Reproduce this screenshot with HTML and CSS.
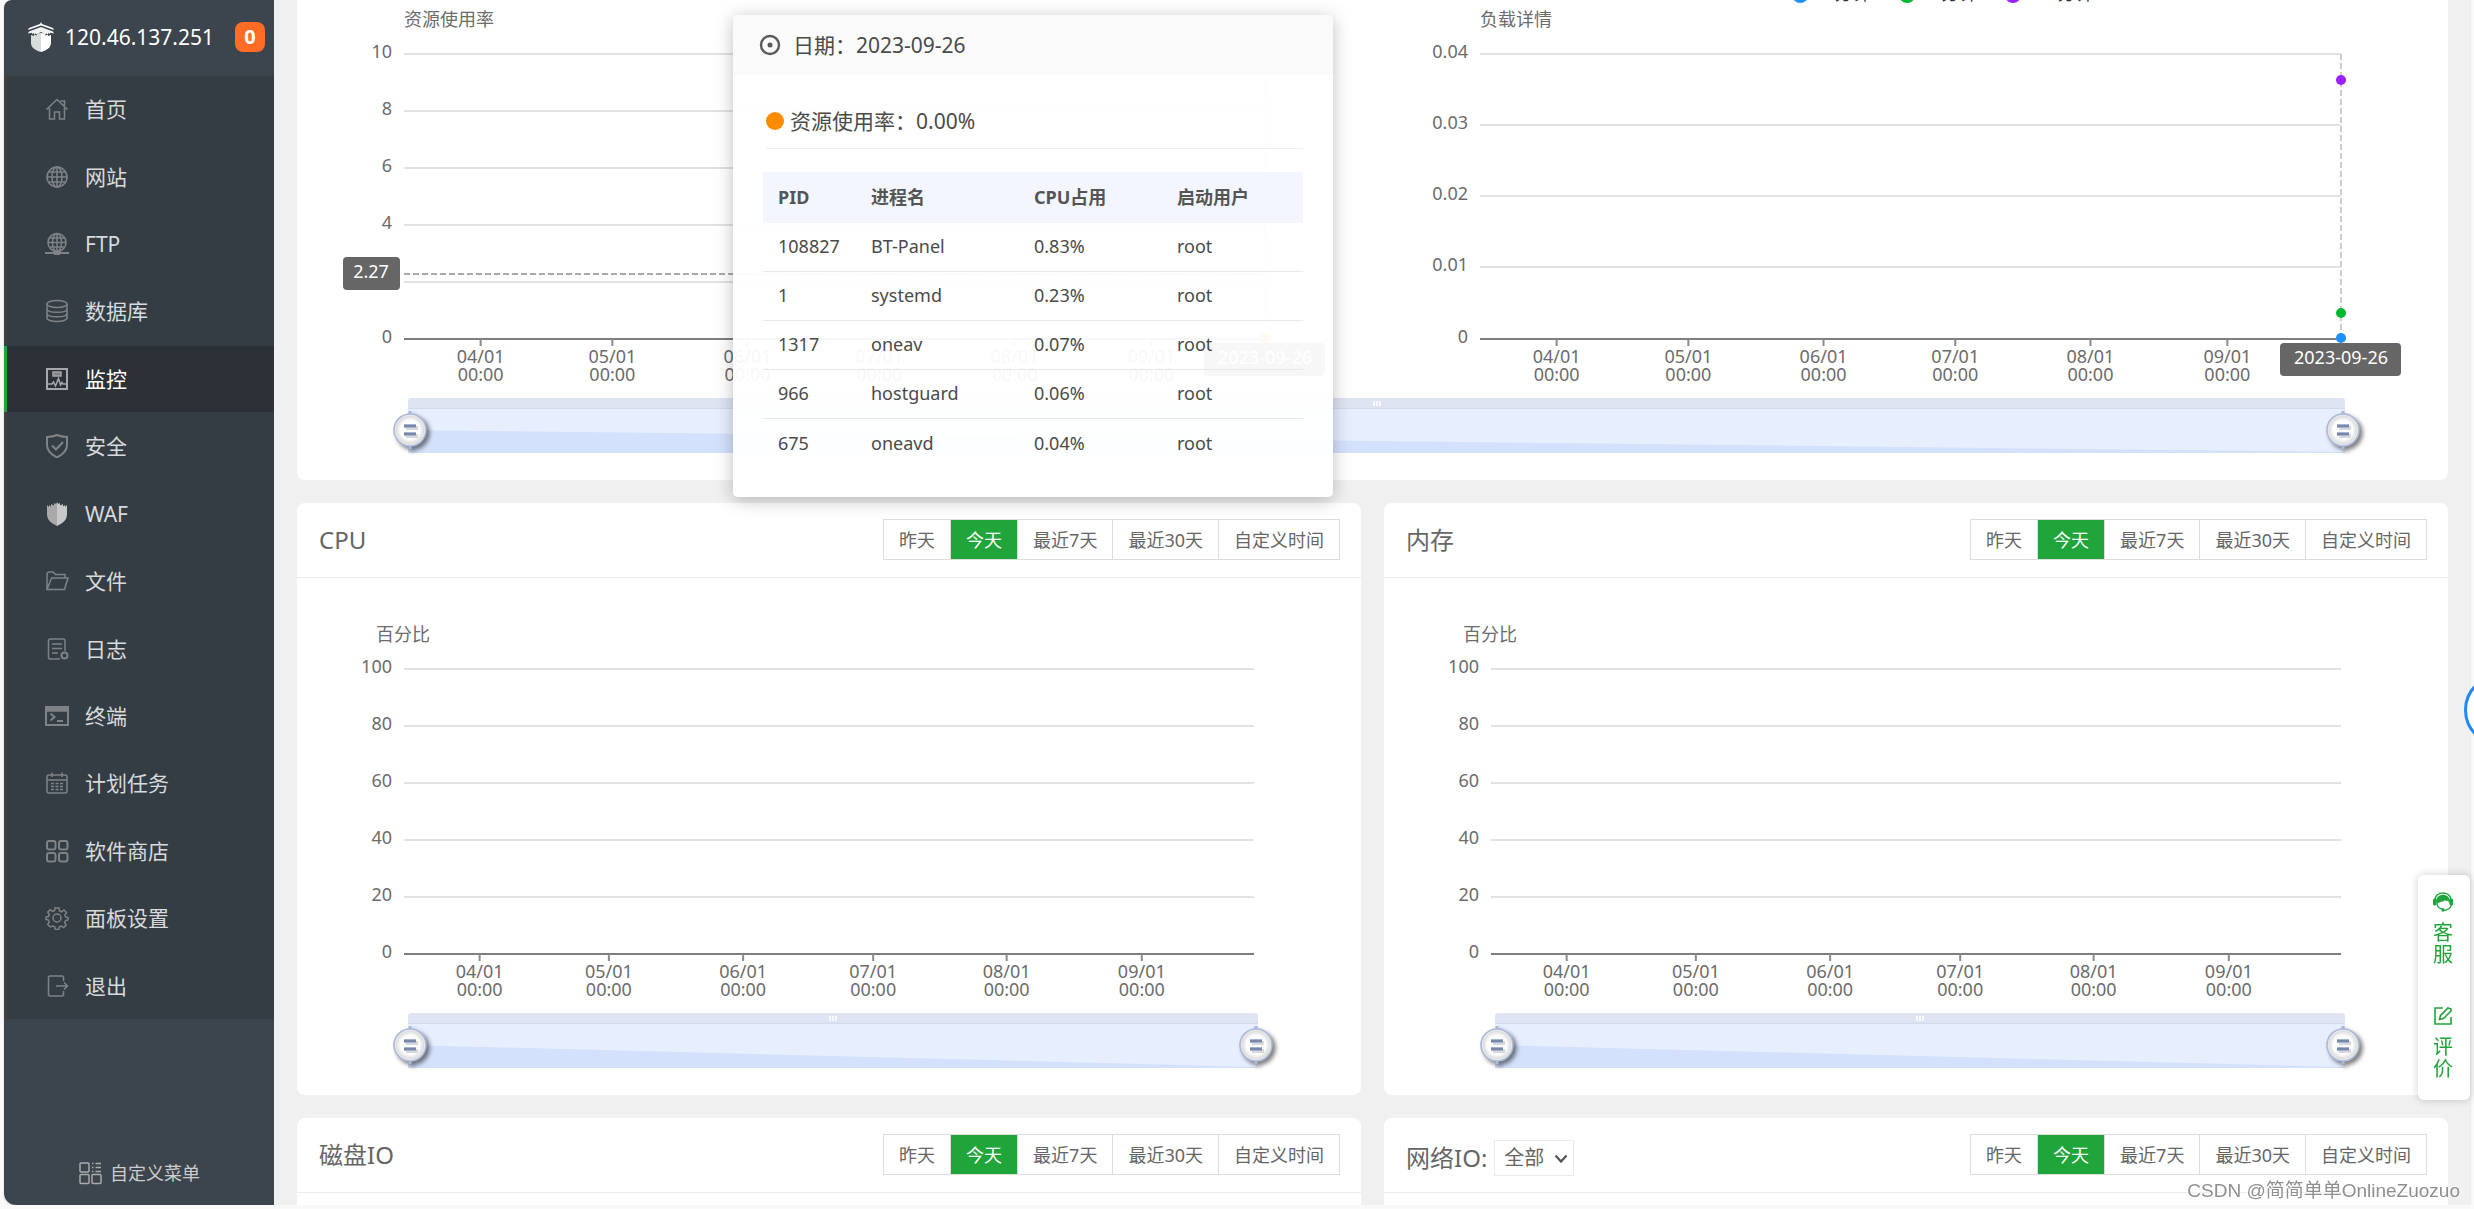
FILE: index.html
```html
<!DOCTYPE html>
<html lang="zh-CN">
<head>
<meta charset="utf-8">
<meta name="viewport" content="width=device-width, initial-scale=1">
<title>监控</title>
<link rel="stylesheet" href="styles.css">
</head>
<body>
<svg class="defs" aria-hidden="true">
  <defs>
    <radialGradient id="knob">
      <stop offset="0.6" stop-color="#fdfdfd"/>
      <stop offset="0.85" stop-color="#dedede"/>
      <stop offset="1" stop-color="#f4f4f4"/>
    </radialGradient>
    <symbol id="handle" viewBox="0 0 44 44">
      <path d="M22 3v4M22 37v4" stroke="#a9b9da" stroke-width="3"/>
      <circle cx="22" cy="22" r="16" fill="url(#knob)" stroke="#a9b9da" stroke-width="1.6"/>
      <path d="M18 20h12M18 28h12" stroke="#d8d8d8" stroke-width="4"/>
      <path d="M16 18h12M16 26h12" stroke="#a3b3d6" stroke-width="4"/>
      <path d="M16 18h12M16 26h12" stroke="#6d7b98" stroke-width="1.6"/>
    </symbol>
    <symbol id="grip" viewBox="0 0 8 5"><path d="M1 0v5M4 0v5M7 0v5" stroke="#fff" stroke-width="1.5"/></symbol>
  </defs>
</svg>

<div class="app">
  <aside class="sidebar">
    <header class="server">
      <svg class="logo" viewBox="0 0 28 30" aria-hidden="true">
        <path d="M14 0l1 2 11 4 1 2-13-4.500L1 8l1-2 11-4z" fill="#fff"/>
        <path d="M14 5l12 4.500 1 2-4-.8v1.300l-2-1v1.500l-2-1.200v1.200L14 10l-5 2.500v-1.200l-2 1.200V11l-2 1v-1.300l-4 .8 1-2z" fill="#f2f2f2"/>
        <path d="M14 11v19c-5-1.500-10-4-10-9v-8l3 1v-1.500l3 1V11.500z" fill="#d9dbdd"/>
        <path d="M14 11v19c5-1.500 10-4 10-9v-8l-3 1v-1.500l-3 1V11.500z" fill="#fff"/>
      </svg>
      <span class="ip">120.46.137.251</span>
      <span class="badge">0</span>
    </header>
    <nav class="menu">
      <a href="#home"><svg viewBox="0 0 24 24"><path d="M1.500 12.500L12 2.500l10.500 10M4.500 11v11h5v-7h5v7h5V11M15.500 4h4v4.500"/></svg>首页</a>
      <a href="#site"><svg viewBox="0 0 24 24"><circle cx="12" cy="12" r="10"/><ellipse cx="12" cy="12" rx="5" ry="10"/><path d="M12 2v20M2 12h20M4 7h16M4 17h16"/></svg>网站</a>
      <a href="#ftp"><svg viewBox="0 0 24 24"><circle cx="12" cy="10.500" r="9"/><ellipse cx="12" cy="10.500" rx="4.500" ry="9"/><path d="M12 2v17M3 10.500h18M5 6h14M5 15h14"/><path d="M0 21h24" stroke-width="2"/><path d="M9 21h6" stroke-width="4"/></svg>FTP</a>
      <a href="#database"><svg viewBox="0 0 24 24"><ellipse cx="12" cy="5" rx="10" ry="3.500"/><path d="M2 5v14c0 2 4.500 3.500 10 3.500s10-1.500 10-3.500V5M2 10c0 2 4.500 3.300 10 3.300S22 12 22 10M2 14.500c0 2 4.500 3.300 10 3.300s10-1.300 10-3.300"/></svg>数据库</a>
      <a href="#monitor" class="active" aria-current="page"><svg viewBox="0 0 24 24"><path d="M2 2h20v20H2z" stroke-width="2"/><path d="M8 5h8v4H8z" class="solid"/><path d="M3 17h4l1.500-2 2 4 3-7.500 2 6.500 1.500-2.500 1 1.500h4"/></svg>监控</a>
      <a href="#security"><svg viewBox="0 0 24 24"><path d="M12 1c3 1.300 6.500 1.800 10 2v8c0 6-4 9.500-10 12.500C6 20.500 2 17 2 11V3c3.500-.2 7-.7 10-2z" stroke-width="2"/><path d="M7 11.500l4 4 7-7.500" stroke-width="2"/></svg>安全</a>
      <a href="#waf"><svg viewBox="0 0 24 24"><path d="M12 0v24C6 21 2 18 2 12V3l2 2V3l2 1.500V2l3 1.500V1l2 1z" fill="#a9a9a9" stroke="none"/><path d="M12 0v24c6-3 10-6 10-12V3l-2 2V3l-2 1.500V2l-3 1.500V1l-2 1z" fill="#c9c9c9" stroke="none"/></svg>WAF</a>
      <a href="#files"><svg viewBox="0 0 24 24"><path d="M2 20V4.500L3.500 3H8l2.500 2.500H20V9M2 20.500L6.500 9H23l-3.500 11.500z"/></svg>文件</a>
      <a href="#logs"><svg viewBox="0 0 24 24"><path d="M15 22H4.500L3.500 21V3l1-1H19l1 1v11M7 7h10M7 11.500h10M7 16h6"/><circle cx="19.500" cy="18.500" r="3" stroke-width="2"/></svg>日志</a>
      <a href="#terminal"><svg viewBox="0 0 24 24"><path d="M1 3h22v18H1z" stroke-width="2"/><path d="M1 3h22v4H1z" class="solid"/><path d="M5.500 9.500l4 3.500-4 3.500M12 17h6" stroke-width="2"/></svg>终端</a>
      <a href="#cron"><svg viewBox="0 0 24 24"><rect x="2" y="4" width="20" height="18" rx="2"/><path d="M2 9h20M7 1.500V6M17 1.500V6"/><path d="M6 12.500h12M6 15.500h12M6 18.500h12" stroke-dasharray="3 1.500"/></svg>计划任务</a>
      <a href="#store"><svg viewBox="0 0 24 24"><g stroke-width="2"><rect x="2" y="2" width="8.500" height="8.500" rx="2"/><rect x="14" y="2" width="8.500" height="8.500" rx="2"/><rect x="2" y="14" width="8.500" height="8.500" rx="2"/><rect x="14" y="14" width="8.500" height="8.500" rx="2"/></g></svg>软件商店</a>
      <a href="#settings"><svg viewBox="0 0 24 24"><circle cx="12" cy="12" r="4"/><path d="M10 2h4l.5 3 2 .8 2.500-1.800 2.500 2.600-1.600 2.500.8 1.900 2.300.5v2.500l-2.500.6-.8 2 1.500 2.500-2.500 2.500-2.400-1.500-2 .8-.6 2.600h-3.400l-.6-2.600-2-.8L5.200 21l-2.500-2.500 1.500-2.400-.8-2L1 13.500V11l2.500-.5.8-2-1.600-2.400 2.500-2.500 2.500 1.700 1.900-.8z"/></svg>面板设置</a>
      <a href="#logout"><svg viewBox="0 0 24 24"><path d="M18.500 7V3l-1-1h-13l-1 1v18l1 1h13l1-1v-4M11 12h11M19 8.500l3.500 3.500-3.500 3.500"/></svg>退出</a>
    </nav>
    <footer class="custom">
      <button type="button" class="custom-btn"><svg viewBox="0 0 24 24"><rect x="2" y="2" width="9" height="9" rx="1"/><rect x="2" y="13.500" width="9" height="9" rx="1"/><rect x="14" y="13.500" width="9" height="9" rx="1"/><path d="M14 2.500h1.500M17.500 2.500H23M14 6.500h1.500M17.500 6.500H23M14 10.500h1.500M17.500 10.500H23"/></svg>自定义菜单</button>
    </footer>
  </aside>

  <main class="main">
    <section class="card load">
      <div class="plots">
        <svg class="plot short" role="img" aria-label="资源使用率">
          <text class="name" x="0" y="26">资源使用率</text>
          <g class="grid"><line x2="100%" y1="54" y2="54"/><line x2="100%" y1="111" y2="111"/><line x2="100%" y1="168" y2="168"/><line x2="100%" y1="225" y2="225"/><line x2="100%" y1="282" y2="282"/></g>
          <g class="ylabels"><text x="-12" y="58">10</text><text x="-12" y="115">8</text><text x="-12" y="172">6</text><text x="-12" y="229">4</text><text x="-12" y="343">0</text></g>
          <line class="axis" x2="100%" y1="339" y2="339"/>
          <g class="xlabels">
            <svg x="8.9%" y="339"><line y2="7"/><text y="24">04/01</text><text y="42">00:00</text></svg>
            <svg x="24.2%" y="339"><line y2="7"/><text y="24">05/01</text><text y="42">00:00</text></svg>
            <svg x="39.9%" y="339"><line y2="7"/><text y="24">06/01</text><text y="42">00:00</text></svg>
            <svg x="55.2%" y="339"><line y2="7"/><text y="24">07/01</text><text y="42">00:00</text></svg>
            <svg x="70.9%" y="339"><line y2="7"/><text y="24">08/01</text><text y="42">00:00</text></svg>
            <svg x="86.8%" y="339"><line y2="7"/><text y="24">09/01</text><text y="42">00:00</text></svg>
          </g>
          <line class="pointer dark" x2="100%" y1="274" y2="274"/>
          <line class="pointer" x1="100%" x2="100%" y1="54" y2="339"/>
          <circle cx="100%" cy="338" r="5" fill="#ff8c00"/>
          <g class="tag"><rect x="-61" y="257" width="57" height="33" rx="4"/><text x="-33" y="278">2.27</text></g>
          <svg class="tag" x="100%" y="343"><rect x="-61" width="121" height="33" rx="4"/><text y="21">2023-09-26</text></svg>
        </svg>
        <svg class="plot short" role="img" aria-label="负载详情">
          <g class="legend">
            <svg x="37.2%"><circle cy="-5" r="8" fill="#1e90ff"/><text x="24">1分钟</text></svg>
            <svg x="49.6%"><circle cy="-5" r="8" fill="#00b82e"/><text x="24">5分钟</text></svg>
            <svg x="61.9%"><circle cy="-5" r="8" fill="#9b22ff"/><text x="24">15分钟</text></svg>
          </g>
          <text class="name" x="0" y="26">负载详情</text>
          <g class="grid"><line x2="100%" y1="54" y2="54"/><line x2="100%" y1="125" y2="125"/><line x2="100%" y1="196" y2="196"/><line x2="100%" y1="267" y2="267"/></g>
          <g class="ylabels"><text x="-12" y="58">0.04</text><text x="-12" y="129">0.03</text><text x="-12" y="200">0.02</text><text x="-12" y="271">0.01</text><text x="-12" y="343">0</text></g>
          <line class="axis" x2="100%" y1="339" y2="339"/>
          <g class="xlabels">
            <svg x="8.9%" y="339"><line y2="7"/><text y="24">04/01</text><text y="42">00:00</text></svg>
            <svg x="24.2%" y="339"><line y2="7"/><text y="24">05/01</text><text y="42">00:00</text></svg>
            <svg x="39.9%" y="339"><line y2="7"/><text y="24">06/01</text><text y="42">00:00</text></svg>
            <svg x="55.2%" y="339"><line y2="7"/><text y="24">07/01</text><text y="42">00:00</text></svg>
            <svg x="70.9%" y="339"><line y2="7"/><text y="24">08/01</text><text y="42">00:00</text></svg>
            <svg x="86.8%" y="339"><line y2="7"/><text y="24">09/01</text><text y="42">00:00</text></svg>
          </g>
          <line class="pointer" x1="100%" x2="100%" y1="54" y2="339"/>
          <circle cx="100%" cy="80" r="5" fill="#9b22ff"/><circle cx="100%" cy="313" r="5" fill="#00b82e"/><circle cx="100%" cy="338" r="5" fill="#1e90ff"/>
          <svg class="tag" x="100%" y="343"><rect x="-61" width="121" height="33" rx="4"/><text y="21">2023-09-26</text></svg>
        </svg>
      </div>
      <div class="zoombar"><svg class="grip"><use href="#grip"/></svg><div class="range"><i class="trend"></i></div><svg class="handle start"><use href="#handle"/></svg><svg class="handle end"><use href="#handle"/></svg></div>

      <div class="tooltip" role="tooltip">
        <div class="tip-head"><svg viewBox="0 0 22 22"><circle cx="11" cy="11" r="9" fill="none" stroke="#5a5a5a" stroke-width="2.400"/><circle cx="11" cy="11" r="2.500" fill="#5a5a5a"/></svg>日期：2023-09-26</div>
        <p class="tip-value"><i class="dot"></i>资源使用率：0.00%</p>
        <table class="procs">
          <colgroup><col class="c-pid"><col class="c-name"><col class="c-cpu"><col></colgroup>
          <thead><tr><th scope="col">PID</th><th scope="col">进程名</th><th scope="col">CPU占用</th><th scope="col">启动用户</th></tr></thead>
          <tbody>
            <tr><td>108827</td><td>BT-Panel</td><td>0.83%</td><td>root</td></tr>
            <tr><td>1</td><td>systemd</td><td>0.23%</td><td>root</td></tr>
            <tr><td>1317</td><td>oneav</td><td>0.07%</td><td>root</td></tr>
            <tr><td>966</td><td>hostguard</td><td>0.06%</td><td>root</td></tr>
            <tr><td>675</td><td>oneavd</td><td>0.04%</td><td>root</td></tr>
          </tbody>
        </table>
      </div>
    </section>

    <div class="cards">
      <section class="card">
        <header class="card-head"><h2>CPU</h2><div class="period"><button type="button">昨天</button><button type="button" class="on">今天</button><button type="button">最近7天</button><button type="button">最近30天</button><button type="button">自定义时间</button></div></header>
        <div class="plots">
          <svg class="plot tall" role="img" aria-label="CPU 百分比">
            <text class="name" x="-28" y="63">百分比</text>
            <g class="grid"><line x2="100%" y1="91" y2="91"/><line x2="100%" y1="148" y2="148"/><line x2="100%" y1="205" y2="205"/><line x2="100%" y1="262" y2="262"/><line x2="100%" y1="319" y2="319"/></g>
            <g class="ylabels"><text x="-12" y="95">100</text><text x="-12" y="152">80</text><text x="-12" y="209">60</text><text x="-12" y="266">40</text><text x="-12" y="323">20</text><text x="-12" y="380">0</text></g>
            <line class="axis" x2="100%" y1="376" y2="376"/>
            <g class="xlabels">
              <svg x="8.9%" y="376"><line y2="7"/><text y="24">04/01</text><text y="42">00:00</text></svg>
              <svg x="24.1%" y="376"><line y2="7"/><text y="24">05/01</text><text y="42">00:00</text></svg>
              <svg x="39.9%" y="376"><line y2="7"/><text y="24">06/01</text><text y="42">00:00</text></svg>
              <svg x="55.2%" y="376"><line y2="7"/><text y="24">07/01</text><text y="42">00:00</text></svg>
              <svg x="70.9%" y="376"><line y2="7"/><text y="24">08/01</text><text y="42">00:00</text></svg>
              <svg x="86.8%" y="376"><line y2="7"/><text y="24">09/01</text><text y="42">00:00</text></svg>
            </g>
          </svg>
        </div>
        <div class="zoombar"><svg class="grip"><use href="#grip"/></svg><div class="range"><i class="trend"></i></div><svg class="handle start"><use href="#handle"/></svg><svg class="handle end"><use href="#handle"/></svg></div>
      </section>

      <section class="card">
        <header class="card-head"><h2>内存</h2><div class="period"><button type="button">昨天</button><button type="button" class="on">今天</button><button type="button">最近7天</button><button type="button">最近30天</button><button type="button">自定义时间</button></div></header>
        <div class="plots">
          <svg class="plot tall" role="img" aria-label="内存 百分比">
            <text class="name" x="-28" y="63">百分比</text>
            <g class="grid"><line x2="100%" y1="91" y2="91"/><line x2="100%" y1="148" y2="148"/><line x2="100%" y1="205" y2="205"/><line x2="100%" y1="262" y2="262"/><line x2="100%" y1="319" y2="319"/></g>
            <g class="ylabels"><text x="-12" y="95">100</text><text x="-12" y="152">80</text><text x="-12" y="209">60</text><text x="-12" y="266">40</text><text x="-12" y="323">20</text><text x="-12" y="380">0</text></g>
            <line class="axis" x2="100%" y1="376" y2="376"/>
            <g class="xlabels">
              <svg x="8.9%" y="376"><line y2="7"/><text y="24">04/01</text><text y="42">00:00</text></svg>
              <svg x="24.1%" y="376"><line y2="7"/><text y="24">05/01</text><text y="42">00:00</text></svg>
              <svg x="39.9%" y="376"><line y2="7"/><text y="24">06/01</text><text y="42">00:00</text></svg>
              <svg x="55.2%" y="376"><line y2="7"/><text y="24">07/01</text><text y="42">00:00</text></svg>
              <svg x="70.9%" y="376"><line y2="7"/><text y="24">08/01</text><text y="42">00:00</text></svg>
              <svg x="86.8%" y="376"><line y2="7"/><text y="24">09/01</text><text y="42">00:00</text></svg>
            </g>
          </svg>
        </div>
        <div class="zoombar"><svg class="grip"><use href="#grip"/></svg><div class="range"><i class="trend"></i></div><svg class="handle start"><use href="#handle"/></svg><svg class="handle end"><use href="#handle"/></svg></div>
      </section>

      <section class="card">
        <header class="card-head"><h2>磁盘IO</h2><div class="period"><button type="button">昨天</button><button type="button" class="on">今天</button><button type="button">最近7天</button><button type="button">最近30天</button><button type="button">自定义时间</button></div></header>
        <div class="empty"></div>
      </section>

      <section class="card">
        <header class="card-head">
          <div class="net"><label for="nic">网络IO:</label><span class="select"><select id="nic"><option>全部</option></select><svg viewBox="0 0 14 10" aria-hidden="true"><path d="M1.500 1.500L7 7.500l5.500-6" fill="none" stroke="#555" stroke-width="2.200"/></svg></span></div>
          <div class="period"><button type="button">昨天</button><button type="button" class="on">今天</button><button type="button">最近7天</button><button type="button">最近30天</button><button type="button">自定义时间</button></div></header>
        <div class="empty"></div>
      </section>
    </div>
  </main>
</div>

<div class="bubble"></div>
<div class="service">
  <a href="#service"><svg viewBox="0 0 20 20"><path d="M2 7C3 3 6 1 10 1s7 2 8 6" fill="none" stroke="#20a53a" stroke-width="1.400"/><path d="M3 9C3.500 5 6.500 2.800 10 2.800S16.500 5 17 9l-.5 3-1.500-3.500-2 .8-.8-1.300c-2.200 2-4.700 1.800-7.200 3L4 13z" fill="#20a53a"/><rect x="0" y="6.500" width="3.500" height="7" rx="1.500" fill="#20a53a"/><rect x="16.500" y="6.500" width="3.500" height="7" rx="1.500" fill="#20a53a"/><path d="M4 12c.7 3 3 5 6 5M18.500 13c-1 3-4 5-7.500 5.300" fill="none" stroke="#20a53a" stroke-width="1.200"/><circle cx="10" cy="18" r="1.700" fill="#20a53a"/></svg><span>客服</span></a>
  <a href="#rate"><svg viewBox="0 0 20 20" fill="none" stroke="#20a53a" stroke-width="1.600"><path d="M10 2H2v16h16v-7M6.500 13.500l1-4L15 2l3 1v2l-7.500 7.500z"/></svg><span>评价</span></a>
</div>
<div class="watermark">CSDN @简简单单OnlineZuozuo</div>
</body>
</html>
```
FILE: styles.css
```css
* { box-sizing: border-box; }

body {
  margin: 0;
  overflow: hidden;
  background: #f9f9f9;
  color: #666;
  font-family: "Noto Sans", "Noto Sans CJK SC", sans-serif;
  font-size: 18px;
  line-height: 24px;
}

button, select { font: inherit; color: inherit; }
a { color: inherit; text-decoration: none; }
h2, p { margin: 0; }
.defs { display: block; width: 0; height: 0; }

.app {
  display: flex;
  height: calc(100vh - 4px);
  margin: 0 4px;
  overflow: hidden;
  background: #f0f0f0;
  border-radius: 8px 0 0 12px;
  box-shadow: 0 1px 2px #ccc;
}

/* sidebar */
.sidebar {
  display: flex;
  flex: none;
  flex-direction: column;
  width: 270px;
  background: #3c444d;
}
.server {
  display: flex;
  align-items: center;
  height: 76px;
  padding: 0 9px 2px 23px;
  color: #fff;
  font-size: 21px;
}
.logo { width: 28px; height: 30px; margin-right: 10px; }
.badge {
  width: 30px;
  margin-left: auto;
  background: #ff6c26;
  border-radius: 8px;
  font-size: 20px;
  font-weight: 700;
  line-height: 30px;
  text-align: center;
}
.menu {
  display: flex;
  flex: 1;
  flex-direction: column;
  gap: 1px;
  background: #353d44;
  color: #d8dadc;
  font-size: 21px;
}
.menu a {
  display: flex;
  flex: 1;
  align-items: center;
  gap: 16px;
  padding-left: 38px;
  border-left: 3px solid #43413f;
}
.menu .active {
  background: #2c3037;
  border-left-color: #20a53a;
  color: #fff;
}
.menu svg, .custom svg {
  width: 24px;
  height: 24px;
  fill: none;
  stroke: #7f8386;
  stroke-width: 1.500;
}
.menu .active svg { stroke: #a5a7aa; }
.menu .solid { fill: #7f8386; }
.custom {
  display: flex;
  align-items: flex-end;
  justify-content: center;
  height: 186px;
  padding: 0 0 20px;
}
.custom-btn {
  display: flex;
  align-items: center;
  gap: 8px;
  padding: 0;
  border: 0;
  background: none;
  color: #ccc;
}
.custom svg { stroke: #aaa; }

/* content */
.main {
  flex: 1;
  min-width: 0;
  padding: 0 22px 0 23px;
  overflow: hidden;
}
.card {
  position: relative;
  background: #fff;
  border-radius: 8px;
}
.load { margin-bottom: 23px; border-radius: 0 0 8px 8px; }
.cards {
  display: grid;
  grid-template-columns: 1fr 1fr;
  gap: 23px;
}
.card-head {
  display: flex;
  align-items: center;
  justify-content: space-between;
  height: 75px;
  padding: 0 21px 1px 22px;
  border-bottom: 1px solid #ececec;
}
.card-head h2 { font-size: 24px; font-weight: 400; }
.period { display: flex; }
.period button {
  height: 41px;
  margin-left: -1px;
  padding: 0 15px;
  border: 1px solid #ddd;
  background: #fff;
}
.period .on { background: #20a53a; color: #fff; }
.net {
  display: flex;
  align-items: center;
  gap: 7px;
  padding-top: 6px;
  font-size: 24px;
}
.select { position: relative; display: flex; font-size: 20px; }
.select select {
  width: 80px;
  height: 36px;
  padding: 0 9px;
  border: 1px solid #eaeaea;
  background: #fff;
  appearance: none;
}
.select svg {
  position: absolute;
  top: 14px;
  right: 6px;
  width: 14px;
  height: 10px;
}
.empty { height: 520px; }

/* charts */
.plots { display: flex; gap: 215px; padding: 0 107px; }
.plot { display: block; flex: 1; min-width: 0; overflow: visible; }
.plot svg { overflow: visible; }
.short { height: 398px; }
.tall { height: 435px; }
.plot text { fill: #6c6c6c; font-size: 18px; }
.plot .legend text { fill: #333; }
.plot .ylabels text { text-anchor: end; }
.plot .xlabels text, .plot .tag text { text-anchor: middle; }
.plot .tag text { fill: #fff; }
.tag rect { fill: #666; }
.grid line { stroke: #e2e2e2; stroke-width: 2; }
.axis { stroke: #7e7e7e; stroke-width: 2; }
.xlabels line { stroke: #8a8a8a; stroke-width: 2; }
.pointer { stroke: #cdcdcd; stroke-width: 2; stroke-dasharray: 6 3; }
.plot .dark { stroke: #aaa; }

.zoombar {
  position: relative;
  height: 82px;
  margin: 0 103px 0 111px;
  padding-bottom: 27px;
}
.range {
  height: 55px;
  border-top: 10px solid #dee4f2;
  border-radius: 3px 3px 0 0;
  background: #e7eefe;
  box-shadow: inset 0 1px #d2dbee, inset 0 -1px #d0dcf2;
}
.trend {
  display: block;
  height: 45px;
  background: #d4e1fc;
  clip-path: polygon(0 22px, 100% 44px, 100% 100%, 0 100%);
}
.grip {
  position: absolute;
  top: 3px;
  left: 50%;
  width: 8px;
  height: 5px;
  margin-left: -4px;
}
.handle {
  position: absolute;
  top: 10px;
  width: 44px;
  height: 44px;
  filter: drop-shadow(3px 3px 2px rgba(0, 0, 0, 0.5));
}
.start { left: -20px; }
.end { right: -20px; }

/* hover tooltip */
.tooltip {
  position: absolute;
  top: 15px;
  left: 436px;
  z-index: 2;
  width: 600px;
  height: 482px;
  background: rgba(255, 255, 255, 0.95);
  border-radius: 5px;
  box-shadow: 0 3px 18px rgba(0, 0, 0, 0.25);
  color: #4a4a4a;
}
.tip-head {
  display: flex;
  align-items: center;
  gap: 12px;
  height: 60px;
  padding: 0 26px;
  background: #fafafa;
  border-radius: 5px 5px 0 0;
  font-size: 21px;
}
.tip-head svg { width: 22px; height: 22px; }
.tip-value {
  display: flex;
  align-items: center;
  gap: 6px;
  height: 74px;
  margin: 0 30px 23px 33px;
  padding-top: 18px;
  border-bottom: 1px solid #eee;
  font-size: 21px;
}
.dot { width: 18px; height: 18px; border-radius: 50%; background: #ff8c00; }
.procs {
  width: 540px;
  margin: 0 30px;
  border-collapse: separate;
  border-spacing: 0;
  table-layout: fixed;
}
.c-pid { width: 93px; }
.c-name { width: 163px; }
.c-cpu { width: 143px; }
.procs th, .procs td { height: 49px; padding: 0 0 2px 15px; text-align: left; }
.procs th { height: 51px; background: #f3f6ff; color: #555; font-weight: 700; }
.procs td { border-bottom: 1px solid #e8e8e8; }
.procs tr:last-child td { border-bottom: 0; }

/* floating pieces */
.service {
  position: fixed;
  right: 4px;
  bottom: 109px;
  display: flex;
  flex-direction: column;
  gap: 40px;
  width: 52px;
  height: 225px;
  padding: 17px 2px 0 0;
  background: #fff;
  border-radius: 6px;
  box-shadow: 0 0 8px rgba(0, 0, 0, 0.2);
  color: #20a53a;
}
.service a {
  display: flex;
  flex-direction: column;
  align-items: center;
  gap: 10px;
}
.service svg { width: 20px; height: 20px; }
.service span {
  width: 20px;
  font-size: 20px;
  line-height: 22px;
  word-break: break-all;
}
.bubble {
  position: fixed;
  top: 674px;
  right: -62px;
  width: 72px;
  height: 72px;
  background: #fff;
  border: 3px solid #1e88ff;
  border-radius: 50%;
}
.watermark {
  position: fixed;
  right: 14px;
  bottom: 6px;
  color: #8f8f8f;
  font-family: "Liberation Sans", "Noto Sans CJK SC", sans-serif;
  font-size: 19px;
  text-shadow: 0 0 2px #fff, -1px -1px #fff;
}
```
